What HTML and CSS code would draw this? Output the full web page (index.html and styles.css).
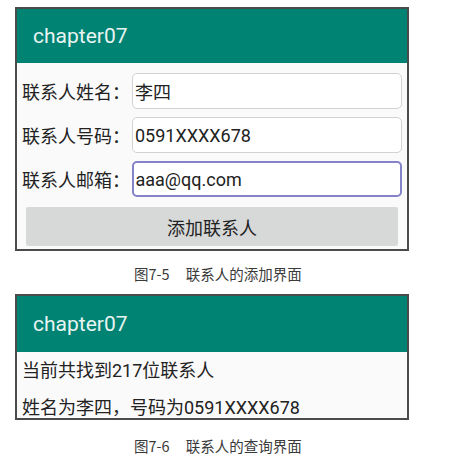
FILE: index.html
```html
<!DOCTYPE html>
<html lang="zh-CN">
<head>
<meta charset="utf-8">
<title>chapter07</title>
<link rel="stylesheet" href="styles.css">
</head>
<body>
<div class="page">
  <div class="phone phone-add">
    <div class="toolbar toolbar-add">chapter07</div>
    <div class="form">
      <div class="row">
        <span class="label">联系人姓名：</span>
        <div class="input">李四</div>
      </div>
      <div class="row">
        <span class="label">联系人号码：</span>
        <div class="input">0591XXXX678</div>
      </div>
      <div class="row">
        <span class="label">联系人邮箱：</span>
        <div class="input focused">aaa@qq.com</div>
      </div>
      <div class="button">添加联系人</div>
    </div>
  </div>
  <div class="caption caption-add"><span class="fig">图7-5</span>联系人的添加界面</div>

  <div class="phone phone-query">
    <div class="toolbar toolbar-query">chapter07</div>
    <div class="result">
      <div class="line">当前共找到217位联系人</div>
      <div class="line">姓名为李四，号码为0591XXXX678</div>
    </div>
  </div>
  <div class="caption caption-query"><span class="fig">图7-6</span>联系人的查询界面</div>
</div>
</body>
</html>
```

FILE: styles.css
```css
html, body {
  margin: 0;
  padding: 0;
  background: #ffffff;
}

.page {
  width: 462px;
  height: 455px;
  padding-top: 7px;
  box-sizing: border-box;
  display: flex;
  flex-direction: column;
  font-family: Roboto, "Noto Sans CJK SC", sans-serif;
}

.phone {
  margin-left: 15px;
  width: 394px;
  border: 2px solid #4b4b4b;
  box-sizing: border-box;
  background: #fafafa;
}

.toolbar {
  background: #008373;
  color: #e8f4f1;
  font-size: 21px;
  padding-left: 16px;
  display: flex;
  align-items: center;
}

.toolbar-add {
  height: 54px;
}

.toolbar-query {
  height: 56px;
}

.form {
  display: flex;
  flex-direction: column;
  padding: 10px 5px 3px 5px;
}

.row {
  display: flex;
  align-items: center;
  height: 36px;
  margin-bottom: 8px;
}

.row:nth-child(3) {
  margin-bottom: 10px;
}

.label {
  width: 110px;
  font-size: 18px;
  color: #222222;
}

.input {
  flex: 1;
  height: 36px;
  box-sizing: border-box;
  border: 1.5px solid #d2d2d2;
  border-radius: 5px;
  background: #ffffff;
  font-size: 18px;
  color: #222222;
  padding-left: 2px;
  display: flex;
  align-items: center;
}

.input.focused {
  border: 2px solid #8482c9;
  padding-left: 1.5px;
}

.button {
  margin: 0 4px;
  height: 39px;
  background: #d7d8d8;
  border-radius: 2px;
  font-size: 18px;
  color: #222222;
  display: flex;
  align-items: center;
  justify-content: center;
}

.caption {
  font-family: "Noto Sans CJK SC", sans-serif;
  font-size: 14.5px;
  color: #3a3a3a;
  margin-left: 134px;
  display: flex;
  align-items: center;
}

.caption .fig {
  margin-right: 16px;
}

.caption-add {
  margin-top: 12px;
  height: 20px;
}

.phone-query {
  margin-top: 11px;
}

.result {
  padding: 9px 0 0 5px;
  display: flex;
  flex-direction: column;
  gap: 17px;
}

.line {
  font-size: 18px;
  line-height: 20px;
  color: #222222;
}

.caption-query {
  margin-top: 15px;
  height: 20px;
}
```
